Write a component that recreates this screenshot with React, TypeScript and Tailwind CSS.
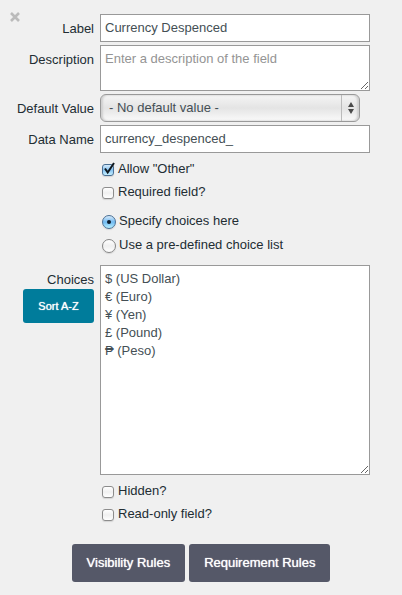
import { useState } from "react";
import type { ReactNode } from "react";

const initialChoices = "$ (US Dollar)\n€ (Euro)\n¥ (Yen)\n£ (Pound)\n₱ (Peso)";

const boxClass =
  "block w-full rounded-none border border-[#999] bg-white px-1 text-[13px] text-[#444f55] outline-none placeholder:text-[#949494]";

const ruleButtonClass =
  "h-[38px] rounded-[3px] bg-[#555868] px-[15px] text-[13px] text-white [text-shadow:0_0_1px_#fff]";

function Row({ label, htmlFor, extra, children }: { label: string; htmlFor: string; extra?: ReactNode; children: ReactNode }) {
  return (
    <div className="flex gap-1.5">
      <div className="flex w-[94px] shrink-0 flex-col items-end pt-[5px]">
        <label htmlFor={htmlFor} className="leading-[19px] whitespace-nowrap">
          {label}
        </label>
        {extra}
      </div>
      <div className="min-w-0 flex-1">{children}</div>
    </div>
  );
}

function Check({ label, defaultChecked = false }: { label: string; defaultChecked?: boolean }) {
  return (
    <label className="flex h-[23px] items-center gap-1">
      <span className="relative mt-0.5 flex">
        <input
          type="checkbox"
          defaultChecked={defaultChecked}
          className="peer size-3 appearance-none rounded-[3px] border border-[#8c8c8c] bg-linear-to-b from-white via-[#f0f0f0] to-white shadow-[0_1px_1px_#d4d4d4] checked:border-[#4a6f94] checked:from-[#d5eafa] checked:via-[#86c3f2] checked:to-[#c5efff]"
        />
        <svg
          viewBox="0 0 13 13"
          className="pointer-events-none absolute -top-0.5 left-0 hidden size-[13px] peer-checked:block"
          fill="none"
          stroke="#10181f"
          strokeWidth="2"
          aria-hidden="true"
        >
          <path d="M3 6.5 L5.7 10.5 L12 1" />
        </svg>
      </span>
      <span>{label}</span>
    </label>
  );
}

function Radio({ label, defaultChecked = false }: { label: string; defaultChecked?: boolean }) {
  return (
    <label className="flex h-6 items-center gap-[3px]">
      <span className="relative mt-0.5 flex">
        <input
          type="radio"
          name="choice-source"
          defaultChecked={defaultChecked}
          className="peer size-3.5 appearance-none rounded-full border border-[#858585] bg-linear-to-b from-white via-[#efefef] to-white shadow-[0_1px_1px_#d4d4d4] checked:border-[#4a6f94] checked:from-[#d8ebfa] checked:via-[#70b9f0] checked:to-[#b8f0ff]"
        />
        <span className="pointer-events-none absolute inset-[5px] hidden rounded-full bg-[#0c1c2c] peer-checked:block" />
      </span>
      <span>{label}</span>
    </label>
  );
}

export default function App() {
  const [choices, setChoices] = useState(initialChoices);
  const sortChoices = () => setChoices(choices.split("\n").sort().join("\n"));

  return (
    <form
      onSubmit={(e) => e.preventDefault()}
      className="relative min-h-screen bg-[#f0f0f0] pt-3.5 pr-8 pb-3 font-['Liberation_Sans',Arial,sans-serif] text-[13px] text-[#222d33]"
    >
      <button type="button" aria-label="Remove field" className="absolute top-3 left-2.5 text-[#bbb]">
        <svg viewBox="0 0 10 10" className="size-2.5" stroke="currentColor" strokeWidth="2.6" aria-hidden="true">
          <path d="M1 1 L9 9 M9 1 L1 9" />
        </svg>
      </button>

      <div className="flex flex-col gap-[3px]">
        <Row label="Label" htmlFor="label">
          <input id="label" defaultValue="Currency Despenced" className={`${boxClass} h-7 pb-0.5`} />
        </Row>
        <Row label="Description" htmlFor="description">
          <textarea
            id="description"
            placeholder="Enter a description of the field"
            className={`${boxClass} h-[46px] resize py-1 leading-[18px]`}
          />
        </Row>
        <Row label="Default Value" htmlFor="default-value">
          <div className="relative mr-2.5">
            <select
              id="default-value"
              className="block h-7 w-full appearance-none rounded-md border border-[#999] bg-linear-to-b from-[#f5f5f5] via-[#e4e4e4] to-[#fafafa] pl-2 text-[13px] text-[#444f55] shadow-[inset_2px_0_2px_#d0d0d0,inset_-2px_0_2px_#d0d0d0] outline-none"
            >
              <option>- No default value -</option>
            </select>
            <div className="pointer-events-none absolute inset-y-px right-px flex w-[18px] items-center justify-center border-l border-[#bbb]">
              <svg viewBox="0 0 6 12" className="h-3 w-1.5" fill="#4a4a4a" aria-hidden="true">
                <path d="M3 0 L6 5 H0 Z M0 7 H6 L3 12 Z" />
              </svg>
            </div>
          </div>
        </Row>
        <Row label="Data Name" htmlFor="data-name">
          <input id="data-name" defaultValue="currency_despenced_" className={`${boxClass} h-7 pb-0.5`} />
        </Row>
      </div>

      <div className="mt-1 flex flex-col items-start pl-[102px]">
        <Check label={'Allow "Other"'} defaultChecked />
        <Check label="Required field?" />
      </div>
      <div className="mt-1.5 mb-2 flex flex-col items-start pl-[102px]">
        <Radio label="Specify choices here" defaultChecked />
        <Radio label="Use a pre-defined choice list" />
      </div>

      <Row
        label="Choices"
        htmlFor="choices"
        extra={
          <button
            type="button"
            onClick={sortChoices}
            className="h-[34px] w-[71px] rounded-[3px] bg-[#007c9b] text-[11px] text-white [text-shadow:0_0_1px_#fff]"
          >
            Sort A-Z
          </button>
        }
      >
        <textarea
          id="choices"
          value={choices}
          onChange={(e) => setChoices(e.target.value)}
          className={`${boxClass} h-[210px] resize py-1 leading-[18px]`}
        />
      </Row>

      <div className="mt-1 flex flex-col items-start pl-[102px]">
        <Check label="Hidden?" />
        <Check label="Read-only field?" />
      </div>

      <div className="mt-[19px] -mr-8 flex justify-center gap-1">
        <button type="button" className={ruleButtonClass}>
          Visibility Rules
        </button>
        <button type="button" className={ruleButtonClass}>
          Requirement Rules
        </button>
      </div>
    </form>
  );
}
